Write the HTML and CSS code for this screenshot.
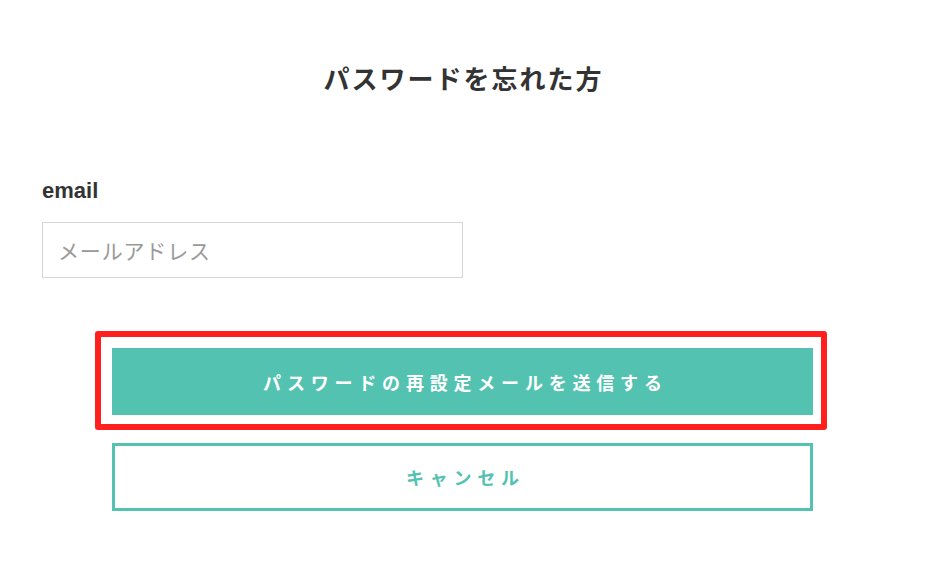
FILE: index.html
```html
<!DOCTYPE html>
<html lang="ja">
<head>
<meta charset="utf-8">
<title>パスワードを忘れた方</title>
<link rel="stylesheet" href="styles.css">
</head>
<body>
<main class="page">
  <h1 class="title">パスワードを忘れた方</h1>
  <form class="form">
    <label class="label" for="email">email</label>
    <input class="input" id="email" type="email" placeholder="メールアドレス">
    <div class="actions">
      <div class="highlight">
        <button class="btn btn-primary" type="submit">パスワードの再設定メールを送信する</button>
      </div>
      <button class="btn btn-outline" type="button">キャンセル</button>
    </div>
  </form>
</main>
</body>
</html>
```

FILE: styles.css
```css
* { box-sizing: border-box; }
html, body { margin: 0; padding: 0; background: #fff; }
body {
  font-family: "Noto Sans CJK JP", "Noto Sans", sans-serif;
  color: #333;
}
.page {
  width: 841px;
  margin-left: 42px;
  padding-top: 60px;
}
.title {
  margin: 0;
  text-align: center;
  font-size: 26px;
  line-height: 36px;
  font-weight: 700;
  letter-spacing: 2px;
  padding-left: 2px;
  color: #333;
}
.form {
  display: flex;
  flex-direction: column;
  padding-top: 81px;
}
.label {
  font-family: "Liberation Sans", Arial, sans-serif;
  font-weight: 700;
  font-size: 22px;
  line-height: 28px;
  color: #333;
}
.input {
  margin-top: 17px;
  width: 421px;
  height: 56px;
  border: 1px solid #d6d6d6;
  border-radius: 0;
  padding: 0 15px;
  font-family: "Noto Sans CJK JP", sans-serif;
  font-size: 21px;
  letter-spacing: 0.04em;
  color: #333;
  outline: none;
}
.input::placeholder { color: #9a9a9a; }
.actions {
  display: flex;
  flex-direction: column;
  gap: 28px;
  padding: 70px 70px 0;
}
.highlight { position: relative; }
.highlight::after {
  content: "";
  position: absolute;
  top: -17px; left: -17px; right: -14px; bottom: -15px;
  border: 6px solid #ff1f1f;
  border-radius: 3px;
  pointer-events: none;
}
.btn {
  display: block;
  width: 100%;
  height: 67px;
  font-family: "Noto Sans CJK JP", sans-serif;
  font-size: 18px;
  font-weight: 700;
  letter-spacing: 5.8px;
  padding: 0 0 0 5.8px;
  border-radius: 0;
  cursor: pointer;
}
.btn-primary {
  background: #53c2b0;
  border: 0;
  color: #fff;
}
.btn-outline {
  background: #fff;
  border: 3px solid #53c2b0;
  color: #53c2b0;
  height: 68px;
}
```
